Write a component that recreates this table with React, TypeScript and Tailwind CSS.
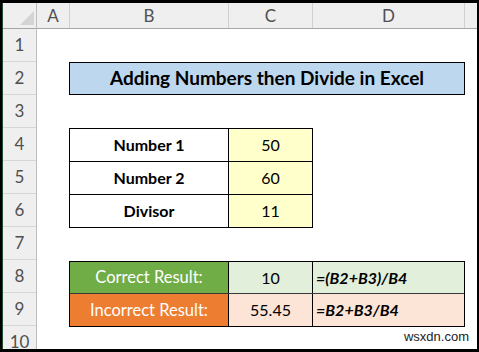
import React from "react";

const rowH = "h-[33px]";

export default function App() {
  const rows = [1, 2, 3, 4, 5, 6, 7, 8, 9, 10];
  return (
    <div className="w-[479px] h-[352px] bg-black pt-[3px] pl-[2px] pr-[2px] pb-[3px]">
      <div
        className="relative w-full h-full bg-white overflow-hidden border-l border-[#1d4d30] flex"
        style={{ fontFamily: "Lato, 'Open Sans', sans-serif" }}
      >
        {/* Row header column */}
        <div className="w-[34px] flex flex-col shrink-0 bg-[#efefef] border-r border-[#bdbdbd]">
          <div className="h-[26px] shrink-0 border-b border-[#a6a6a6] relative">
            <svg className="absolute right-[2px] bottom-[3px]" width="14" height="14" viewBox="0 0 14 14">
              <polygon points="14,0 14,14 0,14" fill="#d4d4d4" />
            </svg>
          </div>
          {rows.map((r) => (
            <div
              key={r}
              className={`${rowH} shrink-0 border-b border-[#d6d6d6] flex items-center justify-center text-[17px] text-[#505050]`}
            >
              {r}
            </div>
          ))}
        </div>
        {/* Sheet area */}
        <div className="flex-1 flex flex-col">
          <div className="h-[26px] shrink-0 flex bg-[#efefef] border-b border-[#a6a6a6] text-[17px] text-[#505050]">
            <div className="w-[33px] border-r border-[#d0d0d0] flex items-center justify-center">A</div>
            <div className="w-[159px] border-r border-[#d0d0d0] flex items-center justify-center">B</div>
            <div className="w-[84px] border-r border-[#d0d0d0] flex items-center justify-center">C</div>
            <div className="w-[152px] border-r border-[#d0d0d0] flex items-center justify-center">D</div>
            <div className="flex-1" />
          </div>
          <div className="flex-1 flex flex-col pl-[33px]">
            {/* row 1 */}
            <div className={`${rowH} shrink-0`} />
            {/* row 2 title */}
            <div className={`${rowH} shrink-0 w-[396px] -ml-px bg-[#bdd7ee] border border-black flex items-center justify-center text-[19px] font-bold text-black`}>
              Adding Numbers then Divide in Excel
            </div>
            {/* row 3 */}
            <div className={`${rowH} shrink-0`} />
            {/* rows 4-6 */}
            <div className="h-[100px] shrink-0 w-[244px] -ml-px border border-black flex flex-col">
              {[
                ["Number 1", "50", "h-[33px] border-b"],
                ["Number 2", "60", "h-[33px] border-b"],
                ["Divisor", "11", "h-[32px]"],
              ].map(([k, v, c]) => (
                <div key={k} className={`${c} shrink-0 flex border-black`}>
                  <div className="w-[159px] shrink-0 border-r border-black flex items-center justify-center text-[16px] font-bold text-black">
                    {k}
                  </div>
                  <div className="flex-1 bg-[#ffffcc] flex items-center justify-center text-[16px] text-black">{v}</div>
                </div>
              ))}
            </div>
            {/* row 7 */}
            <div className={`${rowH} shrink-0`} />
            {/* rows 8-9 */}
            <div className="h-[66px] shrink-0 w-[396px] -ml-px border border-black flex flex-col">
              <div className="h-[32px] shrink-0 flex border-b border-[#3a3a3a]">
                <div className="w-[159px] shrink-0 bg-[#70ad47] border-r border-black flex items-center justify-center text-[16.5px] text-white">
                  Correct Result:
                </div>
                <div className="w-[84px] shrink-0 bg-[#e2efda] border-r border-black flex items-center justify-center text-[16px] text-black">
                  10
                </div>
                <div className="flex-1 bg-[#e2efda] flex items-center pl-[3px] text-[16px] font-bold italic text-black">
                  =(B2+B3)/B4
                </div>
              </div>
              <div className="h-[32px] shrink-0 flex">
                <div className="w-[159px] shrink-0 bg-[#ed7d31] border-r border-black flex items-center justify-center text-[16.5px] text-white">
                  Incorrect Result:
                </div>
                <div className="w-[84px] shrink-0 bg-[#fce4d6] border-r border-black flex items-center justify-center text-[16px] text-black">
                  55.45
                </div>
                <div className="flex-1 bg-[#fce4d6] flex items-center pl-[3px] text-[16px] font-bold italic text-black">
                  =B2+B3/B4
                </div>
              </div>
            </div>
          </div>
        </div>
        <div
          className="absolute right-[8px] bottom-[3px] text-[13px] text-[#222]"
          style={{ fontFamily: "'Liberation Sans', Arial, sans-serif" }}
        >
          wsxdn.com
        </div>
      </div>
    </div>
  );
}
